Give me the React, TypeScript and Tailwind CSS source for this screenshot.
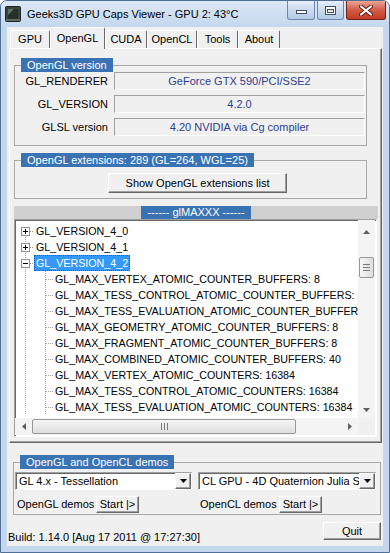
import React from "react";

const F = "font-['Liberation_Sans',Arial,sans-serif]";
const BTN =
  "bg-[#f0f0f0] border border-t-white border-l-white border-r-[#696969] border-b-[#696969] shadow-[inset_-1px_-1px_0_#a0a0a0]";
const SUNKEN =
  "border border-t-[#a0a0a0] border-l-[#a0a0a0] border-r-white border-b-white";

function Legend({ children }: { children: React.ReactNode }) {
  return (
    <legend className="ml-[6px] h-[14px] bg-[#3a73b3] px-[6px] text-[11px] leading-[14px] text-white">
      {children}
    </legend>
  );
}

function TitleBar() {
  return (
    <div className="flex h-[26px] shrink-0 bg-gradient-to-b from-[#dce8f6] to-[#c4d7ed]">
      <div className="flex items-center pl-[4px]">
        <svg width="16" height="16" viewBox="0 0 16 16">
          <rect x="0.5" y="0.5" width="15" height="15" rx="1" fill="#3b4540" stroke="#1f2522" />
          <rect x="3" y="3" width="10" height="10" fill="#25302b" />
          <path d="M3 3h6l-6 6z" fill="#6f8f7a" opacity="0.7" />
          <rect x="1" y="13" width="14" height="2" fill="#5d6a63" />
        </svg>
        <span className="ml-[6px] text-[11px] text-black">Geeks3D GPU Caps Viewer - GPU 2: 43°C</span>
      </div>
      <div className="ml-auto mr-[3px] flex gap-[2px]">
        <div className="flex h-[19px] w-[28px] items-center justify-center rounded-b-[3px] border border-t-0 border-[#6c88ad] bg-gradient-to-b from-[#e6eefa] via-[#cbdaee] to-[#b6cbe6]">
          <svg width="11" height="5" className="mt-[5px]">
            <rect x="0.5" y="0.5" width="10" height="3" fill="#fff" stroke="#3d4f66" />
          </svg>
        </div>
        <div className="flex h-[19px] w-[27px] items-center justify-center rounded-b-[3px] border border-t-0 border-[#6c88ad] bg-gradient-to-b from-[#e6eefa] via-[#cbdaee] to-[#b6cbe6]">
          <svg width="11" height="9">
            <rect x="0.5" y="0.5" width="10" height="8" fill="#fff" stroke="#3d4f66" />
            <rect x="2.5" y="3.5" width="6" height="3" fill="#dfe8f3" stroke="#3d4f66" />
          </svg>
        </div>
        <div className="flex h-[19px] w-[40px] items-center justify-center rounded-b-[3px] border border-t-0 border-[#6d2418] bg-gradient-to-b from-[#eba596] via-[#d35a44] to-[#c23a24]">
          <svg width="14" height="11">
            <path d="M2 1.5L12 9.5M12 1.5L2 9.5" stroke="#5a1c12" strokeWidth="4" strokeLinecap="round" />
            <path d="M2 1.5L12 9.5M12 1.5L2 9.5" stroke="#fff" strokeWidth="2.2" strokeLinecap="round" />
          </svg>
        </div>
      </div>
    </div>
  );
}

const tabs = [
  { name: "GPU", w: "w-[40px]" },
  { name: "OpenGL", w: "w-[55px]", on: true },
  { name: "CUDA", w: "w-[42px]" },
  { name: "OpenCL", w: "w-[50px]" },
  { name: "Tools", w: "w-[41px]" },
  { name: "About", w: "w-[42px]" },
];

function Tabs() {
  return (
    <div className="flex h-[21px] shrink-0 items-end pl-[3px]">
      {tabs.map((t) =>
        t.on ? (
          <div
            key={t.name}
            className={`${t.w} relative z-10 -mb-px flex h-[22px] items-start justify-center rounded-t-[2px] border border-b-0 border-t-white border-l-white border-r-[#696969] bg-[#f0f0f0] pt-[2px] text-[11px]`}
          >
            {t.name}
          </div>
        ) : (
          <div
            key={t.name}
            className={`${t.w} flex h-[18px] items-center justify-center rounded-t-[2px] border border-b-0 border-t-white border-l-white border-r-[#696969] text-[11px]`}
          >
            {t.name}
          </div>
        )
      )}
    </div>
  );
}

function InfoRow({ label, value }: { label: string; value: string }) {
  return (
    <div className="flex h-[18px] items-center">
      <div className="w-[93px] text-right">{label}</div>
      <div className={`ml-[6px] h-[18px] w-[251px] ${SUNKEN} text-center leading-[16px] text-[#2e3f8e]`}>{value}</div>
    </div>
  );
}

function Arrow({ dir }: { dir: "up" | "down" | "left" | "right" }) {
  const d =
    dir === "up"
      ? "M0 4L3.5 0L7 4Z"
      : dir === "down"
      ? "M0 0L7 0L3.5 4Z"
      : dir === "left"
      ? "M4 0L4 7L0 3.5Z"
      : "M0 0L4 3.5L0 7Z";
  const vert = dir === "up" || dir === "down";
  return (
    <svg width={vert ? 7 : 4} height={vert ? 4 : 7}>
      <path d={d} fill="#5f5f5f" />
    </svg>
  );
}

function RootGlyph({ open, first }: { open: boolean; first?: boolean }) {
  return (
    <svg width="19" height="16" className="shrink-0">
      <line x1="10.5" y1={first ? 8 : 0} x2="10.5" y2="16" stroke="#a0a0a0" strokeDasharray="1 1" />
      <line x1="15" y1="8.5" x2="19" y2="8.5" stroke="#a0a0a0" strokeDasharray="1 1" />
      <rect x="6.5" y="4.5" width="8" height="8" fill="#fff" stroke="#919191" />
      <line x1="8" y1="8.5" x2="13" y2="8.5" stroke="#000" />
      {!open && <line x1="10.5" y1="6" x2="10.5" y2="11" stroke="#000" />}
    </svg>
  );
}

function ChildGlyph() {
  return (
    <svg width="38" height="16" className="shrink-0">
      <line x1="10.5" y1="0" x2="10.5" y2="16" stroke="#a0a0a0" strokeDasharray="1 1" />
      <line x1="30.5" y1="0" x2="30.5" y2="16" stroke="#a0a0a0" strokeDasharray="1 1" />
      <line x1="31" y1="8.5" x2="38" y2="8.5" stroke="#a0a0a0" strokeDasharray="1 1" />
    </svg>
  );
}

const children = [
  "GL_MAX_VERTEX_ATOMIC_COUNTER_BUFFERS: 8",
  "GL_MAX_TESS_CONTROL_ATOMIC_COUNTER_BUFFERS: 8",
  "GL_MAX_TESS_EVALUATION_ATOMIC_COUNTER_BUFFERS: 8",
  "GL_MAX_GEOMETRY_ATOMIC_COUNTER_BUFFERS: 8",
  "GL_MAX_FRAGMENT_ATOMIC_COUNTER_BUFFERS: 8",
  "GL_MAX_COMBINED_ATOMIC_COUNTER_BUFFERS: 40",
  "GL_MAX_VERTEX_ATOMIC_COUNTERS: 16384",
  "GL_MAX_TESS_CONTROL_ATOMIC_COUNTERS: 16384",
  "GL_MAX_TESS_EVALUATION_ATOMIC_COUNTERS: 16384",
];

function Tree() {
  return (
    <div className="ml-[4px] flex h-[218px] w-[363px] flex-col border border-t-[#a0a0a0] border-l-[#a0a0a0] border-r-white border-b-white bg-white shadow-[inset_1px_1px_0_#696969]">
      <div className="flex h-[198px]">
        <div className="w-[343px] overflow-hidden whitespace-nowrap pt-[3px] text-[10.7px]">
          <div className="flex h-[16px] items-center">
            <RootGlyph open={false} first />
            <span className="px-[2px] leading-[16px]">GL_VERSION_4_0</span>
          </div>
          <div className="flex h-[16px] items-center">
            <RootGlyph open={false} />
            <span className="px-[2px] leading-[16px]">GL_VERSION_4_1</span>
          </div>
          <div className="flex h-[16px] items-center">
            <RootGlyph open />
            <span className="h-[16px] bg-[#3399ff] px-[2px] leading-[16px] text-white outline-1 outline-dotted outline-offset-[-1px] outline-[#1d5fa8]">
              GL_VERSION_4_2
            </span>
          </div>
          {children.map((c) => (
            <div key={c} className="flex h-[16px] items-center">
              <ChildGlyph />
              <span className="px-[2px] leading-[16px]">{c}</span>
            </div>
          ))}
        </div>
        <div className="flex w-[17px] flex-col bg-[#f4f4f4]">
          <div className="flex h-[17px] items-end justify-center pb-[3px]">
            <Arrow dir="up" />
          </div>
          <div className="mx-[1px] mt-[20px] flex h-[21px] flex-col items-center justify-center gap-[2px] rounded-[2px] border border-[#979797] bg-gradient-to-r from-[#f5f5f5] to-[#dedede]">
            <div className="h-px w-[7px] bg-[#7a7a7a]" />
            <div className="h-px w-[7px] bg-[#7a7a7a]" />
            <div className="h-px w-[7px] bg-[#7a7a7a]" />
          </div>
          <div className="flex-1" />
          <div className="flex h-[17px] items-center justify-center">
            <Arrow dir="down" />
          </div>
        </div>
      </div>
      <div className="flex h-[17px]">
        <div className="flex w-[343px] bg-[#f4f4f4]">
          <div className="flex w-[17px] items-center justify-center">
            <Arrow dir="left" />
          </div>
          <div className="my-[1px] flex w-[264px] items-center justify-center gap-[2px] rounded-[2px] border border-[#979797] bg-gradient-to-b from-[#f5f5f5] to-[#dedede]">
            <div className="h-[7px] w-px bg-[#7a7a7a]" />
            <div className="h-[7px] w-px bg-[#7a7a7a]" />
            <div className="h-[7px] w-px bg-[#7a7a7a]" />
          </div>
          <div className="flex-1" />
          <div className="flex w-[17px] items-center justify-center">
            <Arrow dir="right" />
          </div>
        </div>
        <div className="w-[17px] bg-[#f0f0f0]" />
      </div>
    </div>
  );
}

function Panel() {
  return (
    <div className="ml-[2px] mr-[1px] flex h-[395px] shrink-0 flex-col border border-t-white border-l-white border-r-[#696969] border-b-[#696969] shadow-[inset_-1px_-1px_0_#a0a0a0]">
      <fieldset className="ml-[4px] mt-[9px] h-[88px] w-[353px] border border-[#a8a8a8]">
        <Legend>OpenGL version</Legend>
        <div className="flex flex-col gap-[5px]">
          <InfoRow label="GL_RENDERER" value="GeForce GTX 590/PCI/SSE2" />
          <InfoRow label="GL_VERSION" value="4.2.0" />
          <InfoRow label="GLSL version" value="4.20 NVIDIA via Cg compiler" />
        </div>
      </fieldset>
      <fieldset className="ml-[4px] mt-[7px] h-[46px] w-[353px] border border-[#a8a8a8]">
        <Legend>OpenGL extensions: 289 (GL=264, WGL=25)</Legend>
        <div className={`ml-[93px] mt-[6px] flex h-[20px] w-[179px] items-center justify-center ${BTN}`}>
          Show OpenGL extensions list
        </div>
      </fieldset>
      <div className="ml-[4px] mt-[7px] flex h-[13px] w-[364px] justify-center bg-[#d0d0d0]">
        <div className="bg-[#3a73b3] px-[6px] text-[11px] leading-[13px] text-white">------ glMAXXX ------</div>
      </div>
      <Tree />
    </div>
  );
}

function Combo({ text, w }: { text: string; w: string }) {
  return (
    <div className={`flex h-[18px] ${w} items-stretch bg-white ${SUNKEN} shadow-[inset_1px_1px_0_#696969]`}>
      <div className="flex-1 overflow-hidden whitespace-nowrap pl-[3px] leading-[16px]">{text}</div>
      <div className={`flex w-[16px] items-center justify-center ${BTN}`}>
        <svg width="7" height="4">
          <path d="M0 0L7 0L3.5 4Z" fill="#000" />
        </svg>
      </div>
    </div>
  );
}

function Demos() {
  return (
    <fieldset className="ml-[6px] mt-[12px] h-[60px] w-[368px] shrink-0 border border-[#a8a8a8]">
      <Legend>OpenGL and OpenCL demos</Legend>
      <div className="ml-px mt-[3px] flex gap-[6px]">
        <Combo text="GL 4.x - Tessellation" w="w-[177px]" />
        <Combo text="CL GPU - 4D Quaternion Julia Set" w="w-[178px]" />
      </div>
      <div className="mt-[6px] flex h-[17px] items-center">
        <span className="ml-[3px] w-[79px]">OpenGL demos</span>
        <div className={`flex h-[17px] w-[43px] items-center justify-center ${BTN}`}>Start |&gt;</div>
        <span className="ml-[61px] w-[79px]">OpenCL demos</span>
        <div className={`flex h-[17px] w-[43px] items-center justify-center ${BTN}`}>Start |&gt;</div>
      </div>
    </fieldset>
  );
}

function Bottom() {
  return (
    <div className="flex h-[31px] shrink-0 justify-between pl-[1px] pr-[2px]">
      <div className="mt-[15px] leading-[14px]">Build: 1.14.0 [Aug 17 2011 @ 17:27:30]</div>
      <div className={`mt-[7px] flex h-[18px] w-[58px] items-center justify-center ${BTN}`}>Quit</div>
    </div>
  );
}

export default function App() {
  return (
    <div
      className={`${F} flex h-[553px] w-[390px] flex-col overflow-hidden rounded-t-[7px] border border-[#4f6f96] bg-[#c4d7ed] text-[11px] text-black`}
    >
      <TitleBar />
      <div className="mx-[6px] mb-[6px] flex flex-1 flex-col bg-[#f0f0f0]">
        <Tabs />
        <Panel />
        <Demos />
        <Bottom />
      </div>
    </div>
  );
}
